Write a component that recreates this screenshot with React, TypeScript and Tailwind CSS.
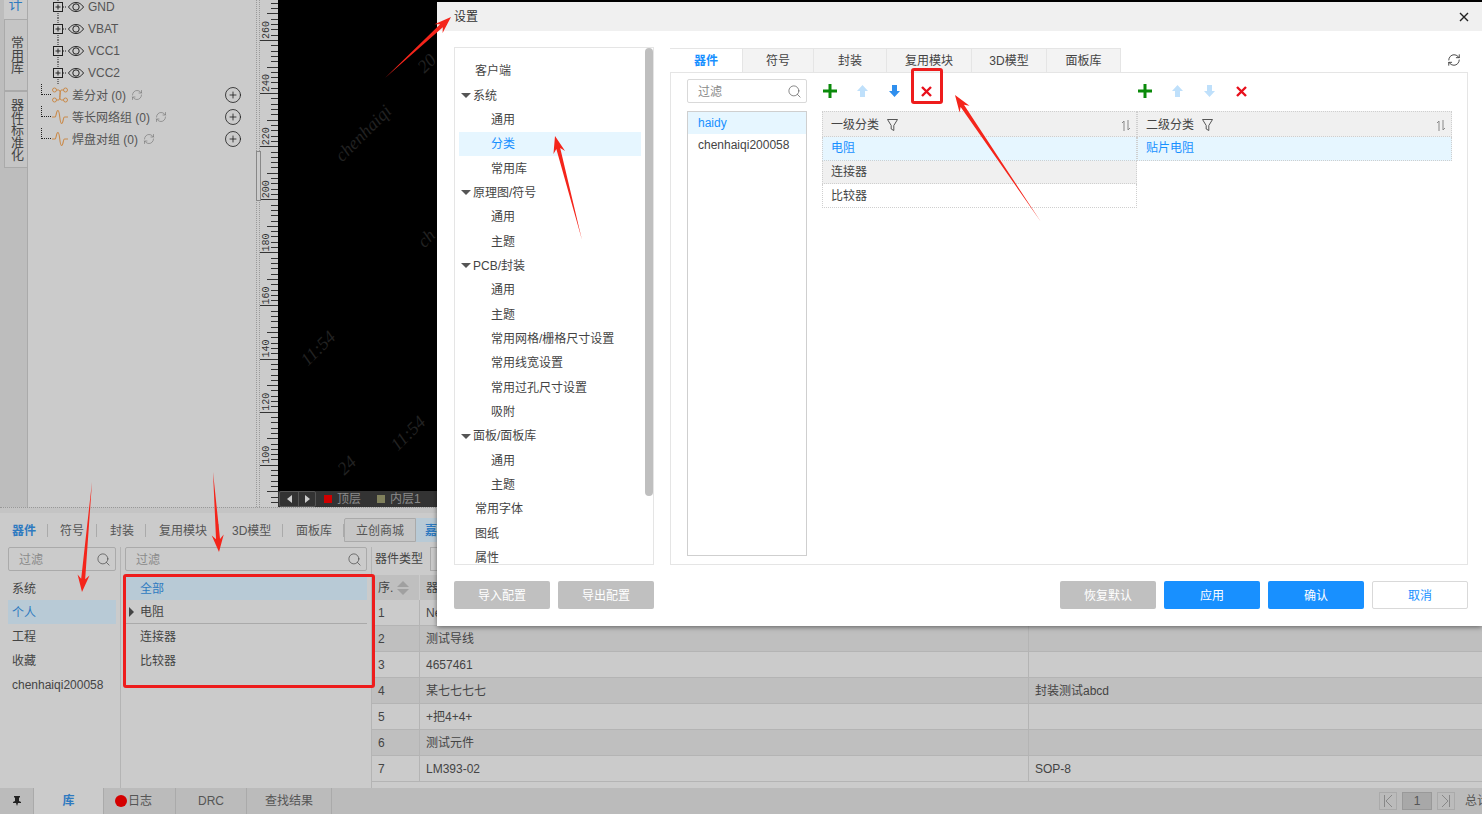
import React from "react";
import { CirclePlus, RefreshCw, Search } from "lucide-react";

const FONT = "font-['Liberation_Sans','Noto_Sans_CJK_SC',sans-serif]";

const nets = ["GND", "VBAT", "VCC1", "VCC2"];
const groups = [
  { label: "差分对 (0)", kind: "diff" },
  { label: "等长网络组 (0)", kind: "wave" },
  { label: "焊盘对组 (0)", kind: "wave" },
];

const settingsTree: { label: string; level: number }[] = [
  { label: "客户端", level: 0 },
  { label: "系统", level: 1 },
  { label: "通用", level: 2 },
  { label: "分类", level: 2 },
  { label: "常用库", level: 2 },
  { label: "原理图/符号", level: 1 },
  { label: "通用", level: 2 },
  { label: "主题", level: 2 },
  { label: "PCB/封装", level: 1 },
  { label: "通用", level: 2 },
  { label: "主题", level: 2 },
  { label: "常用网格/栅格尺寸设置", level: 2 },
  { label: "常用线宽设置", level: 2 },
  { label: "常用过孔尺寸设置", level: 2 },
  { label: "吸附", level: 2 },
  { label: "面板/面板库", level: 1 },
  { label: "通用", level: 2 },
  { label: "主题", level: 2 },
  { label: "常用字体", level: 0 },
  { label: "图纸", level: 0 },
  { label: "属性", level: 0 },
];

const tableRows = [
  ["1", "Ne", ""],
  ["2", "测试导线", ""],
  ["3", "4657461", ""],
  ["4", "某七七七七", "封装测试abcd"],
  ["5", "+把4+4+", ""],
  ["6", "测试元件", ""],
  ["7", "LM393-02", "SOP-8"],
];

const arrows = [
  [385, 78, 451, 17],
  [582, 240, 555, 136],
  [1041, 222, 955, 95],
  [92, 482, 82, 592],
  [213, 472, 219, 552],
];

const Eye = () => (
  <svg width="16" height="10" viewBox="0 0 16 10" fill="none" stroke="#222" strokeWidth="1">
    <path d="M.5 5C3 1.500 5.500.5 8 .5s5 1 7.500 4.500C13 8.500 10.500 9.500 8 9.500S3 8.500.5 5Z" />
    <circle cx="8" cy="5" r="3.200" />
  </svg>
);

const NetIcon = () => (
  <svg width="14" height="22" viewBox="0 0 14 22" fill="none" className="shrink-0">
    <path d="M5 0v6M5 15v7M10 11h4" stroke="#222" strokeDasharray="1 1" />
    <rect x=".5" y="6.500" width="9" height="9" fill="#ccc" stroke="#222" />
    <path d="M2.500 11h5M5 8.500v5" stroke="#222" />
  </svg>
);

const DiffIcon = () => (
  <svg width="16" height="16" viewBox="0 0 16 16" fill="none" stroke="#c98a4a" strokeWidth="1">
    <circle cx="2.500" cy="3" r="2" />
    <circle cx="13.500" cy="3" r="2" />
    <circle cx="2.500" cy="13" r="2" />
    <circle cx="13.500" cy="13" r="2" />
    <path d="M4.500 3h2.500c1.500 0 1 5 1 5s-.5 5 1 5h2.500M8 8c0 0 .5-5 1-5h2.500M8 8c0 0-.5 5-1 5H4.500" />
  </svg>
);

const WaveIcon = () => (
  <svg width="16" height="16" viewBox="0 0 16 16" fill="none" stroke="#c98a4a" strokeWidth="1.100">
    <path d="M0 8h3c1.500 0 1-6.500 3-6.500S7.500 14.500 9.500 14.500 11 8 12.500 8H16" />
  </svg>
);

const Funnel = () => (
  <svg width="11" height="12" viewBox="0 0 11 12" fill="none" stroke="#555" strokeWidth="1">
    <path d="M.5.500h10L6.800 6.500V11.500L4.200 10V6.500Z" />
  </svg>
);

const SortIcon = () => (
  <svg width="10" height="11" viewBox="0 0 10 11" fill="none" stroke="#888" strokeWidth="1">
    <path d="M1 3l2-2v10M7 0v10l2-2" />
  </svg>
);

const PlusIcon = () => (
  <svg width="14" height="14" viewBox="0 0 14 14">
    <path d="M5.500 0h3v5.500H14v3H8.500V14h-3V8.500H0v-3h5.500Z" fill="#0a8a0a" />
  </svg>
);

const CrossIcon = () => (
  <svg width="11" height="11" viewBox="0 0 11 11" fill="none" stroke="#e8101c" strokeWidth="2.400">
    <path d="M1 1l9 9M10 1l-9 9" />
  </svg>
);

const BlockArrow = ({ down, light }: { down?: boolean; light?: boolean }) => (
  <svg width="11" height="12" viewBox="0 0 11 12" className={down ? "rotate-180" : ""}>
    <path d="M5.500 0L11 6H8v6H3V6H0Z" fill={light ? "#bfe0fb" : "#2f8fee"} />
  </svg>
);

const Arrow = ({ from }: { from: number[] }) => {
  const [x1, y1, x2, y2] = from;
  const len = Math.hypot(x2 - x1, y2 - y1);
  const ux = (x2 - x1) / len;
  const uy = (y2 - y1) / len;
  const px = -uy;
  const py = ux;
  const at = (back: number, side: number) =>
    `${x2 - ux * back + px * side},${y2 - uy * back + py * side}`;
  const pts = [
    `${x1},${y1}`,
    at(13, 2),
    at(17, 6),
    `${x2},${y2}`,
    at(17, -6),
    at(13, -2),
  ].join(" ");
  return <polygon points={pts} fill="#f4251b" />;
};

const Ruler = () => {
  const labels = ["260", "240", "220", "200", "180", "160", "140", "120", "100"];
  const ticks = Array.from({ length: 96 }, (_, i) => i);
  return (
    <svg width="18" height="507" className="shrink-0">
      {ticks.map((i) => {
        const major = (i + 3) % 10 === 0;
        const mid = (i + 3) % 5 === 0;
        const y = Math.round(2.830 + i * 5.310) + 0.5;
        return (
          <line
            key={i}
            x1={major ? 0 : mid ? 7 : 11}
            x2="18"
            y1={y}
            y2={y}
            stroke="#333"
          />
        );
      })}
      {labels.map((t, i) => (
        <text
          key={t}
          transform={`translate(9 ${30 + i * 53.100}) rotate(-90)`}
          fontSize="10"
          fontFamily="Liberation Mono, monospace"
          fill="#333"
          textAnchor="middle"
        >
          {t}
        </text>
      ))}
    </svg>
  );
};

const VerticalTab = ({ label, className }: { label: string; className: string }) => (
  <div
    className={`ml-[4px] w-[24px] flex justify-center items-center border border-[#aaa] bg-[#c5c5c5] text-[#444] text-[13px] leading-[14px] tracking-[-0.500px] [writing-mode:vertical-rl] ${className}`}
  >
    {label}
  </div>
);

const Input = ({ className, iconClass }: { className: string; iconClass?: string }) => (
  <div className={`flex items-center justify-between h-[24px] border rounded-[2px] pl-[10px] pr-[4px] ${className}`}>
    <span className="text-[#8a8a8a] pt-px">过滤</span>
    <Search size={15} strokeWidth={1.100} className={iconClass ?? "text-[#444]"} />
  </div>
);

const SettingsTree = () => (
  <div className="relative w-[200px] h-[518px] border border-[#e5e5e5] pt-[11px] pl-[4px] overflow-hidden">
    <div className="absolute right-0 top-0 w-[8px] h-[448px] rounded-[4px] bg-[#bfbfbf]" />
    {settingsTree.map((item, i) => (
      <div
        key={i}
        className={`flex items-center w-[182px] h-[24.350px] ${
          item.label === "分类" ? "bg-[#e6f6ff] text-[#1890ff]" : "text-[#444]"
        } ${item.level === 0 ? "pl-[16px]" : item.level === 1 ? "pl-[2px]" : "pl-[32px]"}`}
      >
        {item.level === 1 && (
          <span className="mr-[2px] w-0 h-0 border-x-[5px] border-x-transparent border-t-[5px] border-t-[#555]" />
        )}
        {item.label}
      </div>
    ))}
  </div>
);

const CategoryTable = ({
  title,
  rows,
}: {
  title: string;
  rows: { label: string; tone: string }[];
}) => (
  <div className="w-[315px]">
    <div className="flex items-center h-[26px] pl-[8px] pr-[5px] pt-[2px] bg-[#f0f0f0] border border-dotted border-[#cfcfcf] text-[#444]">
      <span>{title}</span>
      <span className="ml-[8px]">
        <Funnel />
      </span>
      <span className="ml-auto">
        <SortIcon />
      </span>
    </div>
    {rows.map((r) => (
      <div
        key={r.label}
        className={`flex items-center h-[23.700px] px-[8px] border-x border-b border-dotted border-[#cfcfcf] ${r.tone}`}
      >
        {r.label}
      </div>
    ))}
  </div>
);

const Toolbar = ({ light, className }: { light?: boolean; className: string }) => (
  <div className={`flex items-center h-[24px] ${className}`}>
    <span className="w-[32px] flex justify-center">
      <PlusIcon />
    </span>
    <span className="w-[32px] flex justify-center">
      <BlockArrow light />
    </span>
    <span className="w-[32px] flex justify-center">
      <BlockArrow down light={light} />
    </span>
    <span className="w-[32px] flex justify-center">
      <CrossIcon />
    </span>
  </div>
);

const SettingsDialog = () => {
  const tabs = [
    ["器件", "w-[73px]"],
    ["符号", "w-[71px]"],
    ["封装", "w-[73px]"],
    ["复用模块", "w-[85px]"],
    ["3D模型", "w-[75px]"],
    ["面板库", "w-[74px]"],
  ];
  return (
    <div className="absolute left-[437px] top-[2px] w-[1045px] h-[624px] bg-white shadow-[0_1px_5px_rgba(0,0,0,0.5)]">
      <div className="flex items-center justify-between h-[29px] pl-[17px] pr-[13px] bg-[#f0f0f0] text-[#333]">
        <span>设置</span>
        <svg width="10" height="10" viewBox="0 0 10 10" stroke="#222" strokeWidth="1.400">
          <path d="M1 1l8 8M9 1l-8 8" />
        </svg>
      </div>
      <div className="flex gap-[16px] pl-[17px] pt-[16px]">
        <SettingsTree />
        <div className="w-[798px]">
          <div className="flex items-end h-[25px] relative">
            {tabs.map(([t, w], i) => (
              <div
                key={t}
                className={`${w} h-[24px] pt-px flex items-center justify-center border-r border-t border-[#e5e5e5] ${
                  i === 0 ? "bg-white text-[#1890ff] font-bold" : "bg-[#f3f3f3] text-[#444]"
                }`}
              >
                {t}
              </div>
            ))}
            <RefreshCw size={14} strokeWidth={1.500} className="absolute right-[7px] top-[6px] text-[#333]" />
          </div>
          <div className="flex h-[493px] border border-[#e5e5e5] pl-[16px] pt-[6px]">
            <div className="w-[120px]">
              <Input className="border-[#d9d9d9] w-[120px]" iconClass="text-[#555]" />
              <div className="mt-[8px] h-[445px] border border-[#cfcfcf]">
                <div className="flex items-center h-[22px] pl-[10px] bg-[#e6f6ff] text-[#1890ff]">haidy</div>
                <div className="flex items-center h-[22px] pl-[10px] text-[#444]">chenhaiqi200058</div>
              </div>
            </div>
            <div className="ml-[15px]">
              <div className="flex">
                <Toolbar className="w-[315px] -ml-[8px] mr-[8px]" />
                <Toolbar light className="w-[315px] -ml-[8px]" />
              </div>
              <div className="flex mt-[8px]">
                <CategoryTable
                  title="一级分类"
                  rows={[
                    { label: "电阻", tone: "bg-[#e6f6ff] text-[#1890ff]" },
                    { label: "连接器", tone: "bg-[#f0f0f0] text-[#444]" },
                    { label: "比较器", tone: "bg-white text-[#444]" },
                  ]}
                />
                <CategoryTable
                  title="二级分类"
                  rows={[{ label: "贴片电阻", tone: "bg-[#e6f6ff] text-[#1890ff]" }]}
                />
              </div>
            </div>
          </div>
        </div>
      </div>
      <div className="flex gap-[8px] pl-[17px] pt-[16px]">
        <button className="w-[96px] h-[28px] pt-px rounded-[2px] bg-[#c0c0c0] text-white">导入配置</button>
        <button className="w-[96px] h-[28px] pt-px rounded-[2px] bg-[#c0c0c0] text-white">导出配置</button>
        <button className="ml-[398px] w-[96px] h-[28px] pt-px rounded-[2px] bg-[#c0c0c0] text-white">恢复默认</button>
        <button className="w-[96px] h-[28px] pt-px rounded-[2px] bg-[#1890ff] text-white">应用</button>
        <button className="w-[96px] h-[28px] pt-px rounded-[2px] bg-[#1890ff] text-white">确认</button>
        <button className="w-[96px] h-[28px] pt-px rounded-[2px] border border-[#d9d9d9] bg-white text-[#1890ff]">取消</button>
      </div>
    </div>
  );
};

const TopArea = () => (
  <div className="flex h-[507px] bg-[#cbcbcb] overflow-hidden">
    <div className="w-[28px] shrink-0 bg-[#bdbdbd] border-r border-[#aaa]">
      <div className="ml-[4px] h-[19px] flex items-end justify-center pb-[8px] bg-[#cbcbcb] text-[#2f7ac0] text-[14px] leading-[14px]">计</div>
      <VerticalTab label="常用库" className="h-[72px]" />
      <VerticalTab label="器件标准化" className="h-[77px]" />
    </div>
    <div className="relative w-[228px] shrink-0 -mt-[4px] text-[#555]">
      {nets.map((n) => (
        <div key={n} className="flex items-center h-[22px] pl-[25px]">
          <NetIcon />
          <span className="ml-[1px]">
            <Eye />
          </span>
          <span className="ml-[4px]">{n}</span>
        </div>
      ))}
      {groups.map((g) => (
        <div key={g.label} className="relative flex items-center h-[22px] pl-[13px]">
          <span className="w-[10px] h-[11px] mr-[1px] -mt-[11px] border-l border-b border-dotted border-[#222]" />
          {g.kind === "diff" ? <DiffIcon /> : <WaveIcon />}
          <span className="ml-[4px] pt-px">{g.label}</span>
          <RefreshCw size={12} strokeWidth={1.300} className="ml-[5px] text-[#777]" />
          <CirclePlus size={18} strokeWidth={1} className="absolute left-[196px] text-[#111]" />
        </div>
      ))}
    </div>
    <div className="relative w-[4px] shrink-0 border-x border-dotted border-[#999]">
      <div className="absolute -left-[1px] top-[151px] w-[5px] h-[50px] border border-[#888] bg-[#ccc]" />
    </div>
    <div className="w-[18px] shrink-0 flex flex-col">
      <Ruler />
    </div>
    <div className="flex-1 flex flex-col bg-black">
      <div className="relative flex-1 overflow-hidden text-[#222] italic text-[18px] font-['Liberation_Serif',serif]">
        <span className="absolute left-[50px] top-[120px] -rotate-45">chenhaiqi</span>
        <span className="absolute left-[20px] top-[335px] -rotate-45">11:54</span>
        <span className="absolute left-[110px] top-[420px] -rotate-45">11:54</span>
        <span className="absolute left-[60px] top-[452px] -rotate-45">24</span>
        <span className="absolute left-[140px] top-[225px] -rotate-45">ch</span>
        <span className="absolute left-[140px] top-[50px] -rotate-45">20</span>
      </div>
      <div className="flex items-center h-[16px] bg-[#333] text-[#8a8a8a]">
        <div className="flex ml-[1px] h-[16px] border border-[#555] rounded-[2px]">
          <span className="w-[18px] flex items-center justify-center">
            <span className="w-0 h-0 border-y-[4px] border-y-transparent border-r-[5px] border-r-[#ccc]" />
          </span>
          <span className="w-[17px] flex items-center justify-center border-l border-[#555]">
            <span className="w-0 h-0 border-y-[4px] border-y-transparent border-l-[5px] border-l-[#ccc]" />
          </span>
        </div>
        <span className="ml-[8px] w-[8px] h-[8px] bg-[#d00000]" />
        <span className="ml-[5px] w-[40px]">顶层</span>
        <span className="w-[8px] h-[8px] bg-[#80805c]" />
        <span className="ml-[5px]">内层1</span>
      </div>
    </div>
  </div>
);

const LibTabs = () => {
  const tabs = [
    ["器件", "w-[48px] pl-[12px] text-[#2f7ac0] font-bold"],
    ["符号", "w-[49px] pl-[12px]"],
    ["封装", "w-[49px] pl-[13px]"],
    ["复用模块", "w-[73px] pl-[13px]"],
    ["3D模型", "w-[64px] pl-[13px]"],
    ["面板库", "w-[61px] pl-[13px]"],
  ];
  return (
    <div className="flex items-start h-[34px] pt-[5px] text-[#555]">
      {tabs.map(([t, cls]) => (
        <div key={t} className={`relative h-[24px] pt-px flex items-center ${cls}`}>
          {t}
          <span className="absolute right-0 top-[6px] h-[13px] border-r border-[#aaa]" />
        </div>
      ))}
      <div className="flex items-center justify-center pt-px w-[72px] h-[24px] border border-[#aaa] bg-[#c6c6c6] rounded-tl-[2px]">立创商城</div>
      <div className="flex items-center pl-[9px] pt-px w-[60px] h-[24px] bg-[#b8cad6] text-[#2f7ac0] font-bold">嘉立创</div>
    </div>
  );
};

const BottomArea = () => (
  <div className="h-[301px] flex flex-col">
    <LibTabs />
    <div className="flex h-[241px] text-[#444]">
      <div className="w-[121px] shrink-0 pl-[8px] pr-[4px] border-r border-[#b4b4b4]">
        <Input className="border-[#aaa]" />
        <div className="pt-[5px]">
          {["系统", "个人", "工程", "收藏", "chenhaiqi200058"].map((t) => (
            <div
              key={t}
              className={`flex items-center h-[24px] pt-px pl-[4px] ${t === "个人" ? "bg-[#b8cad6] text-[#2f7ac0]" : ""}`}
            >
              {t}
            </div>
          ))}
        </div>
      </div>
      <div className="w-[250px] shrink-0 pl-[4px] pr-[4px]">
        <Input className="border-[#aaa]" />
        <div className="pt-[5px]">
          <div className="flex items-center h-[24px] pt-px pl-[15px] bg-[#b8cad6] text-[#2f7ac0]">全部</div>
          <div className="flex items-center h-[24px] border-b border-[#aaa]">
            <span className="ml-[4px] mr-[6px] w-0 h-0 border-y-[5px] border-y-transparent border-l-[5px] border-l-[#444]" />
            电阻
          </div>
          <div className="flex items-center h-[25px] pl-[15px]">连接器</div>
          <div className="flex items-center h-[24px] pl-[15px]">比较器</div>
        </div>
      </div>
      <div className="flex-1 border-l border-[#b4b4b4]">
        <div className="flex items-center h-[24px] pl-[3px] gap-[7px]">
          <span>器件类型</span>
          <span className="w-[20px] h-[24px] border border-[#aaa]" />
        </div>
        <div className="flex h-[25px] mt-[4px]">
          <div className="w-[47px] flex items-center pl-[6px] bg-[#bfbfbf] gap-[4px]">
            序.
            <span className="flex flex-col gap-[2px]">
              <span className="w-0 h-0 border-x-[6px] border-x-transparent border-b-[6px] border-b-[#a0a0a0]" />
              <span className="w-0 h-0 border-x-[6px] border-x-transparent border-t-[6px] border-t-[#a0a0a0]" />
            </span>
          </div>
          <div className="flex-1 flex items-center pl-[6px] bg-[#bfbfbf] border-l border-[#cbcbcb]">器件</div>
        </div>
        {tableRows.map((r, i) => (
          <div
            key={r[0]}
            className={`flex h-[26px] items-center border-b border-[#b4b4b4] ${
              i % 2 === 1 ? "bg-[#bfbfbf]" : "bg-[#cbcbcb]"
            }`}
          >
            <div className="w-[47px] pl-[6px]">{r[0]}</div>
            <div className="w-[609px] h-full flex items-center pl-[6px] border-l border-[#b4b4b4]">{r[1]}</div>
            <div className="flex-1 h-full flex items-center pl-[6px] border-l border-[#b4b4b4]">{r[2]}</div>
          </div>
        ))}
      </div>
    </div>
    <div className="flex h-[26px] bg-[#bbb] text-[#555]">
      <div className="w-[34px] flex items-center justify-center border-r border-[#aaa]">
        <svg width="8" height="10" viewBox="0 0 8 10" fill="#222">
          <path d="M1 0h6v1L6 2v3l2 1v1H5l-1 3-1-3H0V6l2-1V2L1 1Z" />
        </svg>
      </div>
      <div className="w-[70px] flex items-center justify-center bg-[#cbcbcb] text-[#2f7ac0] font-bold border-r border-[#aaa]">库</div>
      <div className="w-[72px] flex items-center pl-[11px] border-r border-[#aaa]">
        <span className="w-[12px] h-[12px] rounded-full bg-[#d40000] mr-px" />
        日志
      </div>
      <div className="w-[71px] flex items-center justify-center border-r border-[#aaa]">DRC</div>
      <div className="w-[85px] flex items-center justify-center border-r border-[#aaa]">查找结果</div>
      <div className="ml-auto flex items-center gap-[5px] w-[103px] overflow-hidden">
        <span className="shrink-0 w-[18px] h-[18px] border border-[#aaa] flex items-center justify-center">
          <svg width="10" height="12" viewBox="0 0 10 12" fill="none" stroke="#888">
            <path d="M1.500 0v12M9 0L3 6l6 6" />
          </svg>
        </span>
        <span className="shrink-0 w-[30px] h-[18px] bg-[#a8a8a8] border border-[#999] flex items-center justify-center">1</span>
        <span className="shrink-0 w-[18px] h-[18px] border border-[#aaa] flex items-center justify-center">
          <svg width="10" height="12" viewBox="0 0 10 12" fill="none" stroke="#888">
            <path d="M8.500 0v12M1 0l6 6-6 6" />
          </svg>
        </span>
        <span className="shrink-0 ml-[5px] whitespace-nowrap">总计</span>
      </div>
    </div>
  </div>
);

const App = () => {
  return (
    <div className={`relative w-[1482px] h-[814px] overflow-hidden bg-[#cbcbcb] text-[12px] ${FONT}`}>
      <TopArea />
      <div className="h-[6px] bg-[#c4c4c4] border-t border-dotted border-[#999]" />
      <BottomArea />
      <SettingsDialog />
      {/* annotations on top of the screenshot */}
      <div className="absolute left-[911px] top-[68px] w-[32px] h-[36px] border-[3px] border-[#ee1c1c] rounded-[3px]" />
      <div className="absolute left-[123px] top-[574px] w-[252px] h-[114px] border-[3px] border-[#ee1c1c] rounded-[3px]" />
      <svg width="1482" height="814" className="absolute left-0 top-0 pointer-events-none">
        {arrows.map((a, i) => (
          <Arrow key={i} from={a} />
        ))}
      </svg>
    </div>
  );
};

export default App;
